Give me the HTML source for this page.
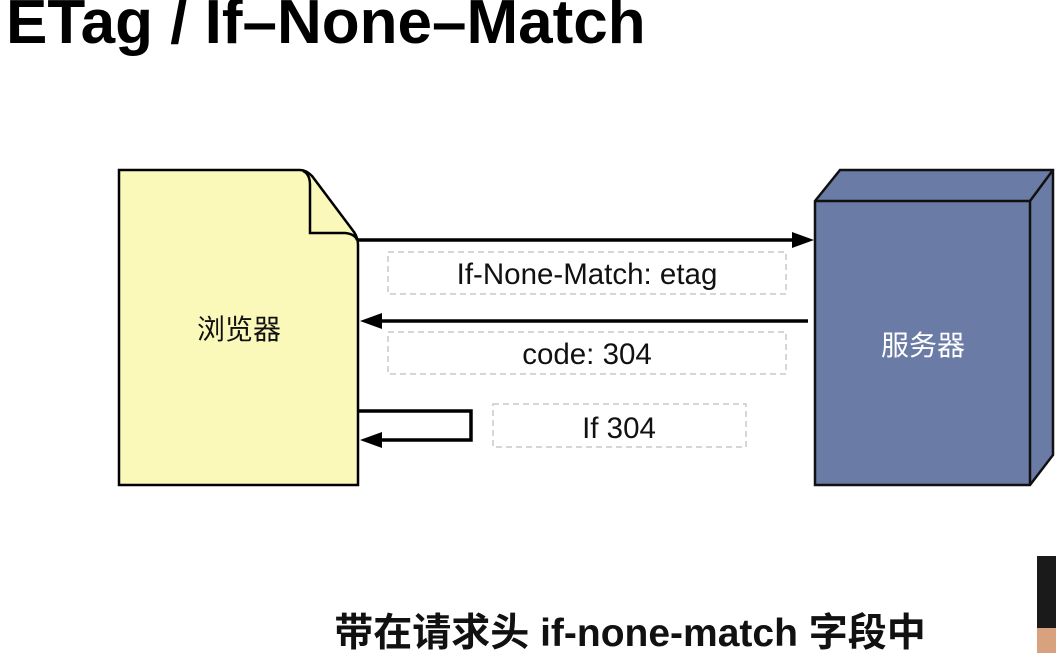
<!DOCTYPE html>
<html><head><meta charset="utf-8"><style>
body{margin:0;width:1056px;height:653px;background:#fff;overflow:hidden;position:relative;font-family:"Liberation Sans","Noto Sans CJK SC",sans-serif}
.t{position:absolute;left:6px;top:-13px;font-size:62px;font-weight:bold;color:#000;white-space:nowrap}
.b{position:absolute;left:0;width:1260px;text-align:center;top:602px;font-size:39px;font-weight:bold;color:#111;white-space:nowrap}
</style></head><body>
<div class="t">ETag / If–None–Match</div>
<svg width="1056" height="653" style="position:absolute;left:0;top:0" font-family="Liberation Sans, Noto Sans CJK SC, sans-serif">
<path d="M119,170 L300,170 Q306,170 312,176 L354,232 Q358,238 358,245 L358,485 L119,485 Z" fill="#fbf9b9" stroke="#000" stroke-width="2.5"/>
<path d="M303,171 Q310,174 310,185 L310,233 L345,233 Q355,234 357,240" fill="none" stroke="#000" stroke-width="2.5"/>
<text x="239" y="339" font-size="28" text-anchor="middle" fill="#111">浏览器</text>
<path d="M815,201 L840,170 L1053,170 L1053,455 L1030,485 L815,485 Z" fill="#6a7ba5" stroke="#111" stroke-width="2.5"/>
<path d="M815,201 L1030,201 L1053,170 M1030,201 L1030,485" fill="none" stroke="#111" stroke-width="2.5"/>
<text x="923" y="355" font-size="28" text-anchor="middle" fill="#fff">服务器</text>
<g stroke="#000" stroke-width="3.5" fill="none">
<path d="M358,240 L795,240"/>
<path d="M808,321 L378,321"/>
<path d="M358,411 L471,411 L471,440 L378,440"/>
</g>
<path d="M814,240 L792,232 L792,248 Z M360,321 L382,313 L382,329 Z M360,440 L382,432 L382,448 Z" fill="#000"/>
<g fill="none" stroke="#c8c8c8" stroke-width="1.5" stroke-dasharray="6,4">
<rect x="388" y="252" width="398" height="42"/>
<rect x="388" y="332" width="398" height="42"/>
<rect x="493" y="404" width="253" height="43"/>
</g>
<g font-size="29.5" text-anchor="middle" fill="#111">
<text x="587" y="284">If-None-Match: etag</text>
<text x="587" y="364">code: 304</text>
<text x="619" y="438">If 304</text>
</g>
<rect x="1037" y="556" width="19" height="97" fill="#1a1a1a"/>
<rect x="1037" y="628" width="19" height="25" fill="#d9a27e"/>
</svg>
<div class="b">带在请求头 if-none-match 字段中</div>
</body></html>
